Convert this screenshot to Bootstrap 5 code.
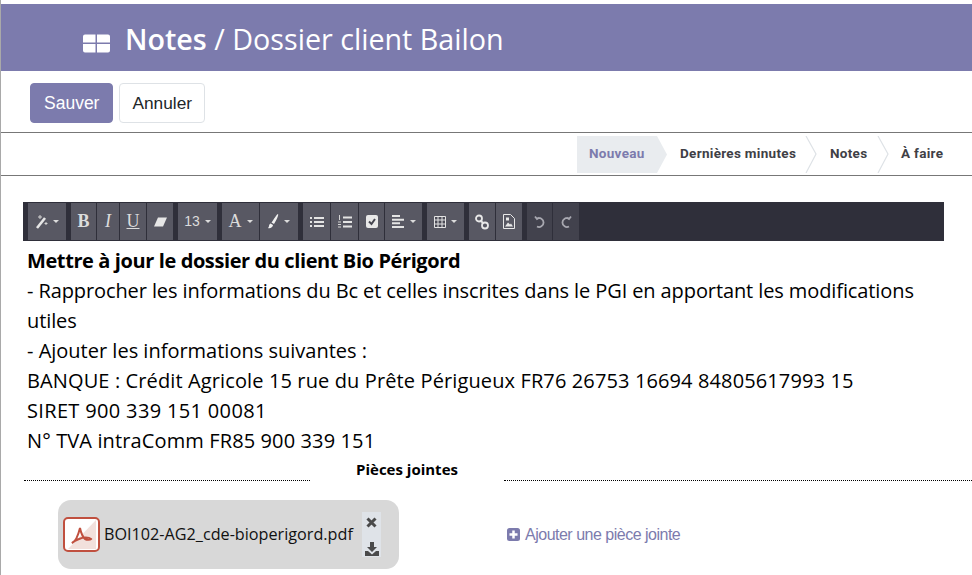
<!DOCTYPE html>
<html lang="fr">
<head>
<meta charset="utf-8">
<title>Notes</title>
<link href="https://cdn.jsdelivr.net/npm/bootstrap@5.3.0/dist/css/bootstrap.min.css" rel="stylesheet">
<style>
html,body{height:575px;overflow:hidden;background:#fff}
body{font-family:"Liberation Sans",Arial,sans-serif;border-left:1px solid #a9a9a9}
.hdr{height:67px;background:#7c7bad;margin-top:4px;padding-left:82px;color:#fff;font-family:"Open Sans",sans-serif;font-size:28.700px;line-height:69px;box-shadow:-1px 0 0 #2f7d4f;white-space:nowrap}
.hdr b{font-weight:600}
.hdr svg{vertical-align:-3px;margin-right:15px}
.actions{height:62px;padding:12px 0 0 29px;gap:6px;border-bottom:1px solid #777}
.bt{height:40px;font-size:17.500px;padding:0 13px;border-radius:4px;line-height:38px}
.bt-p{background:#7c7bad;border:1px solid #7c7bad;color:#fff}
.bt-s{background:#fff;border:1px solid #dee2e6;color:#212529;padding:0 12px;font-size:17.300px}
.statusrow{height:43px;border-bottom:1px solid #777;padding:3px 0 0 576px}
.stp{height:37px;line-height:35px;color:#3f3f46;position:relative;font-family:"Roboto",sans-serif;font-size:13.500px;font-weight:700;letter-spacing:.3px;white-space:nowrap}
.stp-a{width:90px;padding-left:12px;color:#7c7bad;background:#e9ecef;clip-path:polygon(0 0,80px 0,100% 50%,80px 100%,0 100%)}
.stp-b{width:150px;padding-left:13px}
.stp-c{width:72px;padding-left:13px}
.stp-d{padding-left:12px}
.chev{position:absolute;top:0;height:37px;width:12px;right:0}
.editor{margin:26px 28px 0 22px}
.tb{height:39px;background:#2f2f3a;padding:1px 0 0 5px}
.tg{display:flex;gap:1px;margin-right:5px;height:37px}
.tk{height:37px;background:#585863;color:#dcdcdc;display:flex;align-items:center;justify-content:center;gap:5px;font-size:18px;font-family:"Liberation Serif",serif}
.tk.dim{background:#42424d;color:#a0a0a8}
.tk-num{font-family:"Liberation Sans",sans-serif;font-size:14px}
.car{width:0;height:0;border-left:3px solid transparent;border-right:3px solid transparent;border-top:3px solid #dcdcdc}
.w22{width:22px}.w25{width:25px}.w26{width:26px}.w27{width:27px}.w37{width:37px}.w38{width:38px}.w39{width:39px}
.txt{padding:5px 4px 0 4px;font-family:"Open Sans",sans-serif;font-size:20px;line-height:30px;color:#000;letter-spacing:.12px}
.txt b{font-weight:700}
.ls-t{letter-spacing:-.4px}
.ls-l{letter-spacing:-.1px}
.ls-a{letter-spacing:0}
.ls-s{letter-spacing:.34px}
.sep{margin:5px 0 0 23px;height:23px;font-family:"Open Sans",sans-serif;font-weight:700;font-size:15px;color:#000}
.dots{border-bottom:1px dotted #000;height:20px;width:286px}
.dots.r{width:468px}
.ttl{width:194px;text-align:center;line-height:16px}
.attrow{margin:16px 0 0 57px}
.att{width:341px;height:69px;background:#d8d8d8;border-radius:13px;padding:0 0 0 5px;font-family:"Open Sans",sans-serif;font-size:16.200px;color:#111}
.att-n{margin-left:4px;width:258px;white-space:nowrap}
.att-a{width:19px;height:45px;background:#dfe3e8;justify-content:space-between;align-items:center;padding:5px 0 1px}
.add{margin-left:108px;font-size:16px;color:#7c7bad;letter-spacing:-.5px;gap:5px}
</style>
</head>
<body>
<div class="hdr"><svg width="27" height="19" viewBox="0 0 27 19"><path fill="#fff" d="M0 2.500A2 2 0 0 1 2 .5h10.500v8H0zM14 .5h11a2 2 0 0 1 2 2v6H14zM0 10h12.500v8.500H2a2 2 0 0 1-2-2zM14 10h13v6.500a2 2 0 0 1-2 2H14z"/></svg><b>Notes</b> / Dossier client Bailon</div>
<div class="actions d-flex align-items-start"><button class="bt bt-p" type="button">Sauver</button><button class="bt bt-s" type="button">Annuler</button></div>
<div class="statusrow d-flex">
  <div class="stp stp-a">Nouveau</div>
  <div class="stp stp-b">Dernières minutes<svg class="chev" viewBox="0 0 12 37"><path d="M1 0l10 18L1 37" fill="none" stroke="#dee2e6" stroke-width="1.200"/></svg></div>
  <div class="stp stp-c">Notes<svg class="chev" viewBox="0 0 12 37"><path d="M1 0l10 18L1 37" fill="none" stroke="#dee2e6" stroke-width="1.200"/></svg></div>
  <div class="stp stp-d">À faire</div>
</div>
<div class="editor">
  <div class="tb d-flex">
    <div class="tg"><div class="tk w38"><svg width="13" height="15" viewBox="0 0 13 15"><path d="M2 14L10 4" stroke="#e6e6e6" stroke-width="2.600"/><path d="M3 3h4M5 1v4M11 8v3M9.500 9.500h3" stroke="#d4d4d4"/></svg><span class="car"></span></div></div>
    <div class="tg">
      <div class="tk w25"><b>B</b></div><div class="tk w22"><i>I</i></div><div class="tk w26"><u>U</u></div>
      <div class="tk w26"><svg width="13" height="10" viewBox="0 0 13 10"><path fill="#e6e6e6" d="M4 .5h9L9 9.500H0z"/></svg></div>
    </div>
    <div class="tg"><div class="tk tk-num w39">13<span class="car"></span></div></div>
    <div class="tg">
      <div class="tk w37"><span>A</span><span class="car"></span></div>
      <div class="tk w38"><svg width="11" height="15" viewBox="0 0 11 15"><path fill="#f0f0f0" d="M10 0c1 1-2 7-4 10L3.500 8.500C6 5 9 0 10 0zM2.500 9.500L5 11c0 2-3 4-5 3 1.500-1 .5-3.500 2.500-4.500z"/></svg><span class="car"></span></div>
    </div>
    <div class="tg">
      <div class="tk w27"><svg width="14" height="12" viewBox="0 0 14 12"><path stroke="#e4e4e4" stroke-width="2" d="M0 2h2M4 2h10M0 6h2M4 6h10M0 10h2M4 10h10"/></svg></div>
      <div class="tk w27"><svg width="14" height="14" viewBox="0 0 14 14"><path stroke="#e4e4e4" stroke-width="2" d="M5 2.500h9M5 7h9M5 11.500h9"/><path stroke="#d4d4d4" d="M1.500 0v5M0 7h3M0 9.500h3M0 12h3"/></svg></div>
      <div class="tk w25"><svg width="12" height="13" viewBox="0 0 12 13"><rect width="12" height="13" rx="2" fill="#e8e8e8"/><path d="M3 6.500l2.500 2.500L9 4" fill="none" stroke="#45454f" stroke-width="2"/></svg></div>
      <div class="tk w37"><svg width="13" height="13" viewBox="0 0 13 13"><path stroke="#e4e4e4" stroke-width="2" d="M0 1h8M0 4.700h12M0 8.300h8M0 12h12"/></svg><span class="car"></span></div>
    </div>
    <div class="tg"><div class="tk w37"><svg width="12" height="12" viewBox="0 0 12 12"><path fill="#4b4b56" stroke="#e4e4e4" d="M.5.500h11v11H.5z"/><path stroke="#e4e4e4" d="M4 .5v11M8 .5v11M.5 4h11M.5 8h11"/></svg><span class="car"></span></div></div>
    <div class="tg">
      <div class="tk w26"><svg width="14" height="16" viewBox="0 0 14 16"><g fill="none" stroke="#e8e8e8" stroke-width="1.800"><circle cx="4" cy="4.500" r="3"/><circle cx="10" cy="11.500" r="3"/><path d="M5.500 6.500l3 3"/></g></svg></div>
      <div class="tk w26"><svg width="12" height="15" viewBox="0 0 12 15"><path fill="none" stroke="#e8e8e8" d="M.5.500h7l4 4v10H.5z"/><path fill="#e8e8e8" d="M2 12.500l3-4 2 2 1-1 2 3zM3 3.500h3v3H3z"/></svg></div>
    </div>
    <div class="tg">
      <div class="tk dim w25"><svg width="11" height="13" viewBox="0 0 11 13"><path fill="none" stroke="#a8a8b0" stroke-width="1.800" d="M3 3.500a4.500 4.500 0 1 1 0 8M1 1.500l2 2.500 2.500-1.500"/></svg></div>
      <div class="tk dim w26"><svg width="11" height="13" viewBox="0 0 11 13"><path fill="none" stroke="#a8a8b0" stroke-width="1.800" d="M8 3.500a4.500 4.500 0 1 0 0 8M10 1.500L8 4 5.500 2.500"/></svg></div>
    </div>
  </div>
  <div class="txt">
    <div class="ls-t"><b>Mettre à jour le dossier du client Bio Périgord</b></div>
    <div class="ls-l">- Rapprocher les informations du Bc et celles inscrites dans le PGI en apportant les modifications utiles</div>
    <div class="ls-a">- Ajouter les informations suivantes :</div>
    <div>BANQUE : Crédit Agricole 15 rue du Prête Périgueux FR76 26753 16694 84805617993 15</div>
    <div class="ls-s">SIRET 900 339 151 00081</div>
    <div>N° TVA intraComm FR85 900 339 151</div>
  </div>
</div>
<div class="sep d-flex"><div class="dots"></div><div class="ttl">Pièces jointes</div><div class="dots r"></div></div>
<div class="attrow d-flex align-items-center">
  <div class="att d-flex align-items-center">
    <svg width="37" height="35" viewBox="0 0 37 35"><rect x="1" y="1" width="35" height="33" rx="4" fill="#fff" stroke="#c0503f" stroke-width="2"/><path d="M33 3v29H5z" fill="#f2e0dc"/><path fill="none" stroke="#c0503f" stroke-width="2" d="M9 26c3-1 6-7 8-15 1 5 3 9 5 11 2 1 5 1 6 0-2-2-8-2-12 0-3 1-6 3-7 4z"/></svg>
    <div class="att-n">BOI102-AG2_cde-bioperigord.pdf</div>
    <div class="att-a d-flex flex-column">
      <svg width="11" height="11" viewBox="0 0 11 11"><path stroke="#4a4a4a" stroke-width="3" d="M1.500 1.500l8 8M9.500 1.500l-8 8"/></svg>
      <svg width="14" height="14" viewBox="0 0 14 14"><path fill="#4a4a4a" d="M5 0h4v5h3L7 10 2 5h3zM0 9h3l4 3.500L11 9h3v5H0z"/></svg>
    </div>
  </div>
  <div class="add d-flex align-items-center"><svg width="13" height="13" viewBox="0 0 13 13"><rect width="13" height="13" rx="2.500" fill="#7c7bad"/><path stroke="#fff" stroke-width="2.500" d="M6.500 2.500v8M2.500 6.500h8"/></svg>Ajouter une pièce jointe</div>
</div>
</body>
</html>
